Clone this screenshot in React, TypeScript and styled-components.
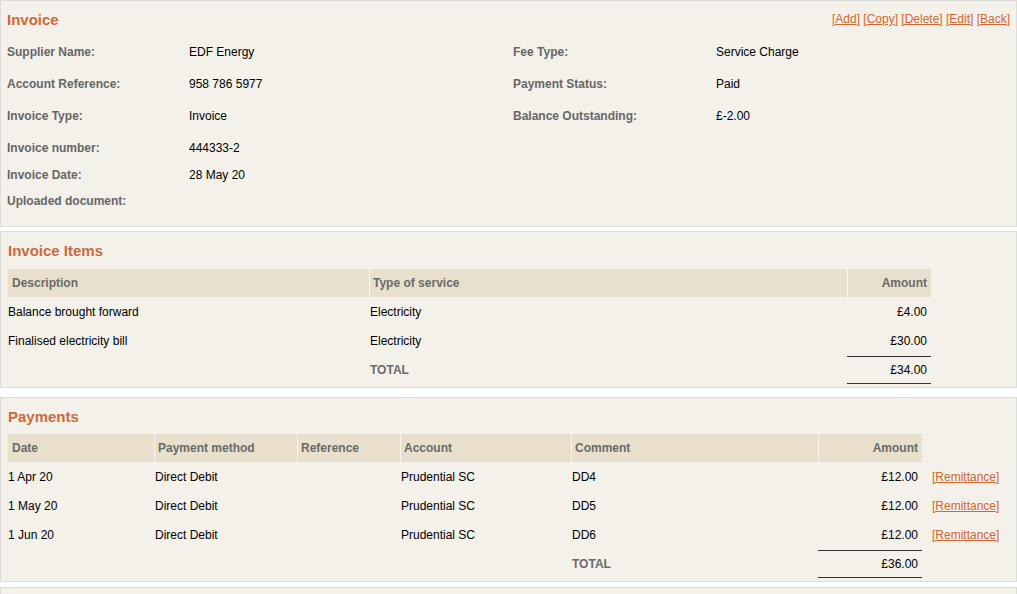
import React from "react";
import styled, { createGlobalStyle } from "styled-components";

const GlobalStyle = createGlobalStyle`
  html, body { margin: 0; padding: 0; background: #ffffff; }
  body { font-family: "Liberation Sans", Arial, sans-serif; font-size: 12px; color: #000; }
`;

const Page = styled.div`
  display: flex;
  flex-direction: column;
  width: 1017px;
`;

const Panel = styled.section<{ $padX: number; $padTop: number; $padBottom: number; $gap: number }>`
  box-sizing: border-box;
  width: 100%;
  background: #f3f1e9;
  border: 1px solid #dddcd8;
  padding: ${(p) => p.$padTop}px ${(p) => p.$padX}px ${(p) => p.$padBottom}px;
  margin-bottom: ${(p) => p.$gap}px;
`;

const PanelHeader = styled.div<{ $h: number }>`
  display: flex;
  align-items: center;
  justify-content: space-between;
  height: ${(p) => p.$h}px;
`;

const Title = styled.h2`
  margin: 0;
  font-size: 15px;
  font-weight: bold;
  color: #cc6a3e;
`;

const Actions = styled.div`
  display: flex;
  gap: 3.3px;
`;

const ActionLink = styled.a`
  color: #d4662f;
  text-decoration: underline;
  font-size: 12px;
  cursor: pointer;
`;

const InfoList = styled.div`
  display: flex;
  flex-direction: column;
  margin-top: 2px;
`;

const InfoRow = styled.div<{ $h: number }>`
  box-sizing: border-box;
  display: grid;
  grid-template-columns: 182px 324px 203px 1fr;
  align-items: center;
  height: ${(p) => p.$h}px;
  padding-top: 2px;
`;

const Label = styled.span`
  font-weight: bold;
  color: #666666;
`;

const Value = styled.span`
  color: #000;
`;

const Table = styled.table<{ $w: number }>`
  width: ${(p) => p.$w}px;
  table-layout: fixed;
  border-collapse: separate;
  border-spacing: 0;
  font-size: 12px;
`;

const Th = styled.th<{ $right?: boolean; $first?: boolean; $blank?: boolean }>`
  background: ${(p) => (p.$blank ? "transparent" : "#e8e0cc")};
  color: #6a6a6a;
  font-weight: bold;
  text-align: ${(p) => (p.$right ? "right" : "left")};
  line-height: 27px;
  padding: 1px 4px 0 ${(p) => (p.$first ? 4 : 3)}px;
  border-left: ${(p) => (p.$first || p.$blank ? "0" : "1px solid #f8f6ef")};
  white-space: nowrap;
`;

const Td = styled.td<{ $right?: boolean; $first?: boolean; $padLeft?: number }>`
  text-align: ${(p) => (p.$right ? "right" : "left")};
  line-height: 27px;
  padding: 2px 4px 0 ${(p) => (p.$padLeft !== undefined ? p.$padLeft : p.$first ? 0 : 1)}px;
  white-space: nowrap;
  vertical-align: middle;
`;

const TotalLabel = styled.td`
  color: #6a6a6a;
  font-weight: bold;
  line-height: 27px;
  padding: 2px 0 0 1px;
`;

const TotalCell = styled.td`
  padding: 1px 0 0 0;
`;

const TotalAmount = styled.div`
  text-align: right;
  line-height: 25px;
  padding: 1px 4px 0 0;
  border-top: 1px solid #333333;
  border-bottom: 1px solid #333333;
`;

const EmptyTd = styled.td`
  padding: 0;
`;

const RemitLink = styled.a`
  color: #d4662f;
  text-decoration: underline;
  cursor: pointer;
`;

const info: { h: number; cells: [string, string, string?, string?] }[] = [
  { h: 32, cells: ["Supplier Name:", "EDF Energy", "Fee Type:", "Service Charge"] },
  { h: 32, cells: ["Account Reference:", "958 786 5977", "Payment Status:", "Paid"] },
  { h: 32, cells: ["Invoice Type:", "Invoice", "Balance Outstanding:", "£-2.00"] },
  { h: 32, cells: ["Invoice number:", "444333-2"] },
  { h: 22, cells: ["Invoice Date:", "28 May 20"] },
  { h: 30, cells: ["Uploaded document:", ""] },
];

const items = [
  { desc: "Balance brought forward", type: "Electricity", amount: "£4.00" },
  { desc: "Finalised electricity bill", type: "Electricity", amount: "£30.00" },
];

const payments = [
  { date: "1 Apr 20", method: "Direct Debit", ref: "", account: "Prudential SC", comment: "DD4", amount: "£12.00" },
  { date: "1 May 20", method: "Direct Debit", ref: "", account: "Prudential SC", comment: "DD5", amount: "£12.00" },
  { date: "1 Jun 20", method: "Direct Debit", ref: "", account: "Prudential SC", comment: "DD6", amount: "£12.00" },
];

const actions = ["Add", "Copy", "Delete", "Edit", "Back"];

export default function App() {
  return (
    <>
      <GlobalStyle />
      <Page>
        <Panel $padX={6} $padTop={4} $padBottom={11} $gap={4}>
          <PanelHeader $h={28}>
            <Title>Invoice</Title>
            <Actions>
              {actions.map((a) => (
                <ActionLink key={a}>[{a}]</ActionLink>
              ))}
            </Actions>
          </PanelHeader>
          <InfoList>
            {info.map((r, i) => (
              <InfoRow key={i} $h={r.h}>
                <Label>{r.cells[0]}</Label>
                <Value>{r.cells[1]}</Value>
                {r.cells[2] && <Label>{r.cells[2]}</Label>}
                {r.cells[3] && <Value>{r.cells[3]}</Value>}
              </InfoRow>
            ))}
          </InfoList>
        </Panel>

        <Panel $padX={7} $padTop={0} $padBottom={3} $gap={9}>
          <PanelHeader $h={37}>
            <Title>Invoice Items</Title>
          </PanelHeader>
          <Table $w={923}>
            <colgroup>
              <col style={{ width: 361 }} />
              <col style={{ width: 478 }} />
              <col style={{ width: 84 }} />
            </colgroup>
            <thead>
              <tr>
                <Th $first>Description</Th>
                <Th>Type of service</Th>
                <Th $right>Amount</Th>
              </tr>
            </thead>
            <tbody>
              {items.map((it) => (
                <tr key={it.desc}>
                  <Td $first>{it.desc}</Td>
                  <Td>{it.type}</Td>
                  <Td $right>{it.amount}</Td>
                </tr>
              ))}
              <tr>
                <EmptyTd />
                <TotalLabel>TOTAL</TotalLabel>
                <TotalCell>
                  <TotalAmount>£34.00</TotalAmount>
                </TotalCell>
              </tr>
            </tbody>
          </Table>
        </Panel>

        <Panel $padX={7} $padTop={0} $padBottom={3} $gap={5}>
          <PanelHeader $h={36}>
            <Title>Payments</Title>
          </PanelHeader>
          <Table $w={1000}>
            <colgroup>
              <col style={{ width: 146 }} />
              <col style={{ width: 143 }} />
              <col style={{ width: 103 }} />
              <col style={{ width: 171 }} />
              <col style={{ width: 247 }} />
              <col style={{ width: 104 }} />
              <col style={{ width: 86 }} />
            </colgroup>
            <thead>
              <tr>
                <Th $first>Date</Th>
                <Th>Payment method</Th>
                <Th>Reference</Th>
                <Th>Account</Th>
                <Th>Comment</Th>
                <Th $right>Amount</Th>
                <Th $blank />
              </tr>
            </thead>
            <tbody>
              {payments.map((p) => (
                <tr key={p.date}>
                  <Td $first>{p.date}</Td>
                  <Td>{p.method}</Td>
                  <Td>{p.ref}</Td>
                  <Td>{p.account}</Td>
                  <Td>{p.comment}</Td>
                  <Td $right>{p.amount}</Td>
                  <Td $padLeft={10}>
                    <RemitLink>[Remittance]</RemitLink>
                  </Td>
                </tr>
              ))}
              <tr>
                <EmptyTd />
                <EmptyTd />
                <EmptyTd />
                <EmptyTd />
                <TotalLabel>TOTAL</TotalLabel>
                <TotalCell>
                  <TotalAmount>£36.00</TotalAmount>
                </TotalCell>
                <EmptyTd />
              </tr>
            </tbody>
          </Table>
        </Panel>

        <Panel $padX={7} $padTop={0} $padBottom={0} $gap={0}>
          <PanelHeader $h={40} />
        </Panel>
      </Page>
    </>
  );
}
